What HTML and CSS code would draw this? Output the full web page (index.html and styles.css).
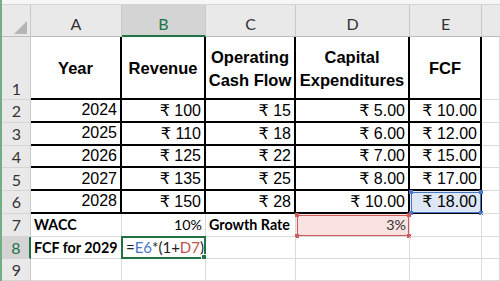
FILE: index.html
```html
<!DOCTYPE html>
<html>
<head>
<meta charset="utf-8">
<link rel="stylesheet" href="styles.css">
</head>
<body>
<div class="app">
  <div class="strip"></div>
  <div class="sheet">
    <div class="ch corner"><span class="tri"></span></div>
    <div class="ch">A</div>
    <div class="ch sel">B</div>
    <div class="ch">C</div>
    <div class="ch">D</div>
    <div class="ch">E</div>
    <div class="ch last"></div>

    <div class="rh rh1">1</div>
    <div class="c t hd">Year</div>
    <div class="c t hd">Revenue</div>
    <div class="c t hd"><span>Operating</span><span>Cash Flow</span></div>
    <div class="c t hd"><span>Capital</span><span>Expenditures</span></div>
    <div class="c t hd">FCF</div>
    <div class="c"></div>

    <div class="rh">2</div>
    <div class="c t r">2024</div>
    <div class="c t r">₹ 100</div>
    <div class="c t r">₹ 15</div>
    <div class="c t r">₹ 5.00</div>
    <div class="c t r">₹ 10.00</div>
    <div class="c"></div>

    <div class="rh">3</div>
    <div class="c t r">2025</div>
    <div class="c t r">₹ 110</div>
    <div class="c t r">₹ 18</div>
    <div class="c t r">₹ 6.00</div>
    <div class="c t r">₹ 12.00</div>
    <div class="c"></div>

    <div class="rh">4</div>
    <div class="c t r">2026</div>
    <div class="c t r">₹ 125</div>
    <div class="c t r">₹ 22</div>
    <div class="c t r">₹ 7.00</div>
    <div class="c t r">₹ 15.00</div>
    <div class="c"></div>

    <div class="rh">5</div>
    <div class="c t r">2027</div>
    <div class="c t r">₹ 135</div>
    <div class="c t r">₹ 25</div>
    <div class="c t r">₹ 8.00</div>
    <div class="c t r">₹ 17.00</div>
    <div class="c"></div>

    <div class="rh">6</div>
    <div class="c t r">2028</div>
    <div class="c t r">₹ 150</div>
    <div class="c t r">₹ 28</div>
    <div class="c t r">₹ 10.00</div>
    <div class="c t r blue">₹ 18.00<span class="box bbox"><i class="sq tl"></i><i class="sq tr"></i><i class="sq bl"></i><i class="sq br"></i></span></div>
    <div class="c"></div>

    <div class="rh">7</div>
    <div class="c cal b">WACC</div>
    <div class="c cal r">10%</div>
    <div class="c cal b clip">Growth Rate</div>
    <div class="c cal r red">3%<span class="box rbox"><i class="sq tl"></i><i class="sq tr"></i><i class="sq bl"></i><i class="sq br"></i></span></div>
    <div class="c"></div>
    <div class="c"></div>

    <div class="rh rsel">8</div>
    <div class="c cal b">FCF for 2029</div>
    <div class="c cal edit">=<span class="ref-b">E6</span>*(1+<span class="ref-r">D7</span>)<span class="caret"></span><span class="gbox"><i class="gsq"></i></span></div>
    <div class="c"></div>
    <div class="c"></div>
    <div class="c"></div>
    <div class="c"></div>

    <div class="rh">9</div>
    <div class="c"></div>
    <div class="c"></div>
    <div class="c"></div>
    <div class="c"></div>
    <div class="c"></div>
    <div class="c"></div>
  </div>
</div>
</body>
</html>
```

FILE: styles.css
```css
html, body {
  margin: 0;
  padding: 0;
  background: #ffffff;
}
body {
  width: 500px;
  height: 281px;
  overflow: hidden;
}
.app {
  height: 281px;
  display: flex;
  flex-direction: column;
  border-left: 2px solid #6fae86;
  box-sizing: border-box;
}
.strip {
  height: 5px;
  background: #f6f6f6;
  border-bottom: 1px solid #d4d4d4;
  box-sizing: border-box;
  flex: none;
}
.sheet {
  flex: 1;
  display: grid;
  grid-template-columns: 29px 91px 84px 90px 114px 72px 1fr;
  grid-template-rows: 32px 63px repeat(7, 22.75px) 1fr;
  font-family: "Liberation Sans", Arial, "DejaVu Sans", sans-serif;
  color: #000;
}
.ch {
  background: #e9e9e9;
  border-right: 1px solid #c9c9c9;
  border-bottom: 1px solid #bdbdbd;
  box-sizing: border-box;
  display: flex;
  align-items: flex-end;
  justify-content: center;
  padding-bottom: 3px;
  font-family: "Lato", "Liberation Sans", sans-serif;
  font-size: 16px;
  color: #333;
}
.ch.last { border-right: none; }
.ch.sel {
  background: #d4d4d4;
  color: #217346;
  border-bottom: 2px solid #217346;
  padding-bottom: 2px;
}
.corner {
  justify-content: flex-end;
  padding: 0 3px 2px 0;
}
.tri {
  width: 13px;
  height: 13px;
  background: #b4b4b4;
  clip-path: polygon(100% 0, 100% 100%, 0 100%);
}
.rh {
  background: #e9e9e9;
  border-right: 1px solid #c9c9c9;
  border-bottom: 1px solid #d4d4d4;
  box-sizing: border-box;
  display: flex;
  align-items: center;
  justify-content: center;
  font-family: "Lato", "Liberation Sans", sans-serif;
  font-size: 16px;
  color: #333;
  padding-left: 1px;
}
.rh1 {
  align-items: flex-end;
  padding-bottom: 1px;
}
.rsel {
  background: #d4d4d4;
  color: #217346;
  border-right: 2px solid #217346;
}
.c {
  position: relative;
  border-right: 1px solid #dadada;
  border-bottom: 1px solid #dadada;
  box-sizing: border-box;
  display: flex;
  align-items: center;
  padding: 0 3px;
  font-size: 16px;
  white-space: nowrap;
  overflow: visible;
}
.t {
  border-right: 2px solid #000;
  border-bottom: 2px solid #000;
}
.hd {
  flex-direction: column;
  justify-content: center;
  align-items: center;
  text-align: center;
  font-weight: bold;
  font-size: 16.5px;
  line-height: 23px;
  padding: 2px 0 0 0;
}
.hd span { display: block; white-space: nowrap; }
.r { justify-content: flex-end; }
.cal {
  font-family: "Lato", "Liberation Sans", sans-serif;
  font-size: 14.3px;
}
.b { font-weight: bold; }
.clip { overflow: hidden; }
.blue { background: #dde7f5; }
.red {
  background: #fbe2e2;
  color: #333;
}
.box {
  position: absolute;
  left: 0;
  top: 0;
  right: 0;
  bottom: 0;
  border: 1px solid;
}
.bbox { border-color: #4a78c8; left: 1px; top: 1px; right: -1px; bottom: -1px; }
.rbox { border-color: #cf5a5a; left: 1px; top: 1px; }
.sq {
  position: absolute;
  width: 4px;
  height: 4px;
}
.bbox .sq { background: #4a78c8; }
.rbox .sq { background: #cf5a5a; }
.tl { left: -3px; top: -3px; }
.tr { right: -3px; top: -3px; }
.bl { left: -3px; bottom: -3px; }
.br { right: -3px; bottom: -3px; }
.edit {
  color: #222;
  font-size: 15px;
  padding-left: 4px;
}
.ref-b { color: #4a78c8; }
.ref-r { color: #c0504d; }
.caret {
  display: inline-block;
  width: 1px;
  height: 17px;
  background: #000;
  margin-left: 1px;
}
.gbox {
  position: absolute;
  left: -1px;
  top: -1px;
  right: -1px;
  bottom: -1px;
  border: 2px solid #217346;
}
.gsq {
  position: absolute;
  right: -3px;
  bottom: -3px;
  width: 4px;
  height: 4px;
  background: #217346;
  border: 1px solid #fff;
}
```
